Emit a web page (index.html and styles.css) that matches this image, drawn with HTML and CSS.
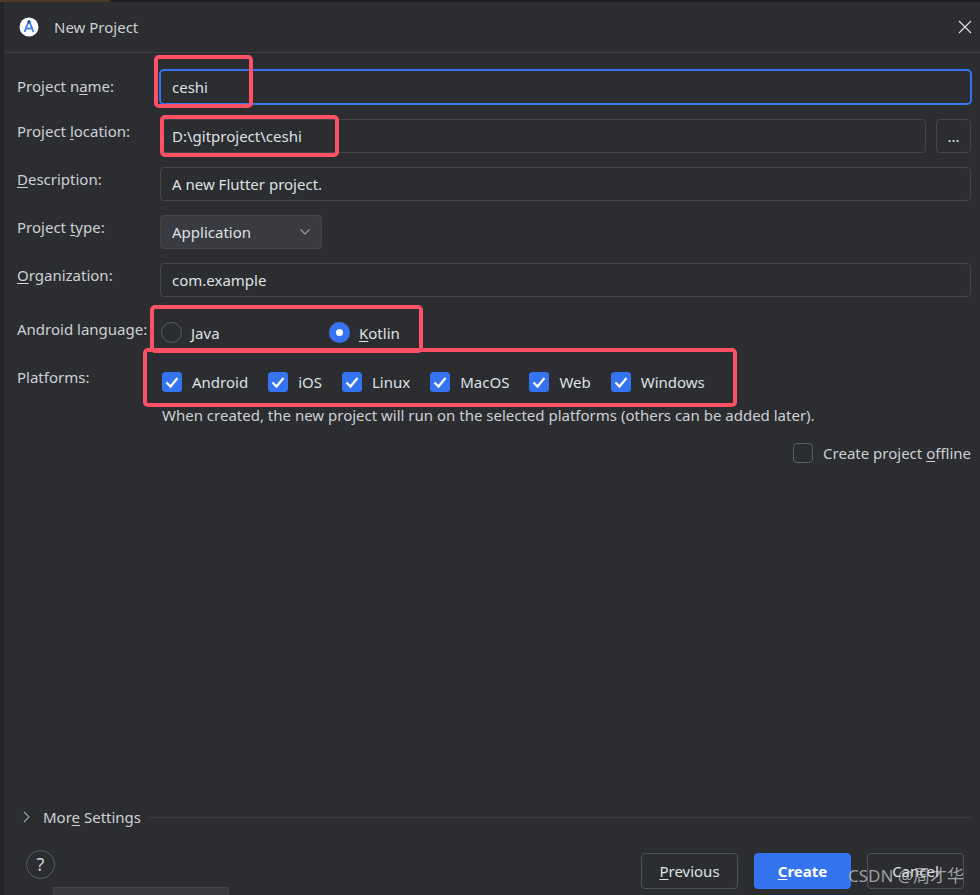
FILE: index.html
```html
<!DOCTYPE html>
<html lang="en">
<head>
    <meta charset="UTF-8">
    <title>New Project</title>
    <link rel="stylesheet" href="styles.css">
</head>
<body>
    <div class="topstrip"><span class="strip-brown"></span></div>
    <div class="leftstrip"></div>

    <section class="dialog">
        <header class="titlebar">
            <svg class="logo" width="20" height="20" viewBox="0 0 20 20">
                <circle cx="10" cy="10" r="9.5" fill="#fff"/>
                <path d="M10 3.5 L5.5 15 M10 3.5 L14.5 15" stroke="#3f7fe8" stroke-width="1.8" fill="none"/>
                <path d="M6 11.5 H14" stroke="#3f7fe8" stroke-width="1.8"/>
                <circle cx="10" cy="5" r="1.6" fill="#1f4f9e"/>
            </svg>
            <span class="title">New Project</span>
            <svg class="close" width="14" height="14" viewBox="0 0 14 14">
                <path d="M1 1 L13 13 M13 1 L1 13" stroke="#e6e6e6" stroke-width="1.1"/>
            </svg>
        </header>

        <main class="form">
            <div class="row row-name">
                <label>Project n<u>a</u>me:</label>
                <div class="field focused">ceshi</div>
            </div>
            <div class="row">
                <label>Project <u>l</u>ocation:</label>
                <div class="field">D:\gitproject\ceshi</div>
                <button class="browse">...</button>
            </div>
            <div class="row">
                <label><u>D</u>escription:</label>
                <div class="field">A new Flutter project.</div>
            </div>
            <div class="row">
                <label>Project <u>t</u>ype:</label>
                <div class="field select">
                    Application
                    <svg width="12" height="8" viewBox="0 0 12 8"><path d="M1.5 1.5 L6 6 L10.5 1.5" stroke="#9da0a8" stroke-width="1.2" fill="none"/></svg>
                </div>
            </div>
            <div class="row">
                <label><u>O</u>rganization:</label>
                <div class="field">com.example</div>
            </div>

            <div class="row row-lang">
                <label>Android language:</label>
                <div class="radios">
                    <span class="radio-item java"><i class="radio"></i><span><u>J</u>ava</span></span>
                    <span class="radio-item"><i class="radio on"></i><span><u>K</u>otlin</span></span>
                </div>
            </div>

            <div class="row row-platforms">
                <label>Platforms:</label>
                <div class="checks">
                    <span class="check-item"><svg class="check" viewBox="0 0 20 20"><rect width="20" height="20" rx="3.5" fill="#3574f0"/><path d="M4.5 10.5 L8.5 14.5 L15.5 6" stroke="#fff" stroke-width="2.2" fill="none"/></svg>Android</span>
                    <span class="check-item"><svg class="check" viewBox="0 0 20 20"><rect width="20" height="20" rx="3.5" fill="#3574f0"/><path d="M4.5 10.5 L8.5 14.5 L15.5 6" stroke="#fff" stroke-width="2.2" fill="none"/></svg>iOS</span>
                    <span class="check-item"><svg class="check" viewBox="0 0 20 20"><rect width="20" height="20" rx="3.5" fill="#3574f0"/><path d="M4.5 10.5 L8.5 14.5 L15.5 6" stroke="#fff" stroke-width="2.2" fill="none"/></svg>Linux</span>
                    <span class="check-item"><svg class="check" viewBox="0 0 20 20"><rect width="20" height="20" rx="3.5" fill="#3574f0"/><path d="M4.5 10.5 L8.5 14.5 L15.5 6" stroke="#fff" stroke-width="2.2" fill="none"/></svg>MacOS</span>
                    <span class="check-item"><svg class="check" viewBox="0 0 20 20"><rect width="20" height="20" rx="3.5" fill="#3574f0"/><path d="M4.5 10.5 L8.5 14.5 L15.5 6" stroke="#fff" stroke-width="2.2" fill="none"/></svg>Web</span>
                    <span class="check-item"><svg class="check" viewBox="0 0 20 20"><rect width="20" height="20" rx="3.5" fill="#3574f0"/><path d="M4.5 10.5 L8.5 14.5 L15.5 6" stroke="#fff" stroke-width="2.2" fill="none"/></svg>Windows</span>
                </div>
            </div>

            <p class="hint">When created, the new project will run on the selected platforms (others can be added later).</p>

            <div class="offline">
                <i class="box"></i>
                <span>Create project <u>o</u>ffline</span>
            </div>
        </main>

        <div class="more">
            <svg width="9" height="12" viewBox="0 0 9 12"><path d="M2 1 L7 6 L2 11" stroke="#9da0a8" stroke-width="1.1" fill="none"/></svg>
            <span>Mor<u>e</u> Settings</span>
            <div class="line"></div>
        </div>

        <footer class="buttons">
            <span class="help">?</span>
            <button class="btn"><u>P</u>revious</button>
            <button class="btn primary"><u>C</u>reate</button>
            <button class="btn">Cancel</button>
        </footer>
    </section>

    <div class="underdialog"></div>

    <!-- red marks drawn on top of the screenshot -->
    <div class="mark m1"></div>
    <div class="mark m2"></div>
    <div class="mark m3"></div>
    <div class="mark m4"></div>

    <div class="watermark">CSDN @周才华</div>
</body>
</html>
```

FILE: styles.css
```css
* {
    box-sizing: border-box;
}

body {
    margin: 0;
    width: 980px;
    height: 895px;
    overflow: hidden;
    position: relative;
    background-color: #2b2d30;
    color: #dfe1e5;
    font-family: "Noto Sans", "Noto Sans CJK SC", sans-serif;
    font-size: 15px;
}

u {
    text-underline-offset: 2px;
}

.topstrip {
    height: 2px;
    background-color: #1e1f22;
}

.strip-brown {
    display: block;
    width: 110px;
    height: 2px;
    background-color: #4a3a26;
}

.leftstrip {
    position: absolute;
    left: 0;
    top: 2px;
    width: 4px;
    height: 893px;
    background-color: #232427;
}

.dialog {
    margin-left: 4px;
    height: 893px;
    display: flex;
    flex-direction: column;
}

.titlebar {
    height: 51px;
    flex: none;
    border-bottom: 1px solid #3c3e43;
    display: flex;
    align-items: center;
    padding: 0 8px 0 15px;
}

.title {
    margin-left: 15px;
    color: #ced0d6;
}

.close {
    margin-left: auto;
}

.form {
    padding: 16px 9px 0 13px;
    flex: 1;
}

.row {
    display: flex;
    margin-bottom: 14px;
}

.row label {
    width: 143px;
    flex: none;
    color: #ced0d6;
    line-height: 24px;
    padding-top: 0;
    white-space: nowrap;
}

.row-name label {
    padding-top: 5px;
}

.field {
    flex: 1;
    height: 34px;
    line-height: 32px;
    border: 1px solid #43454a;
    border-radius: 4px;
    padding: 0 11px;
    color: #dfe1e5;
}

.focused {
    height: 36px;
    line-height: 32px;
    border: 2px solid #3574f0;
    border-radius: 5px;
    margin-left: -1px;
    margin-right: -1px;
    padding-left: 11px;
}

.select {
    flex: none;
    width: 162px;
    background-color: #393b40;
    display: flex;
    align-items: center;
    justify-content: space-between;
    padding-right: 10px;
}

.browse {
    flex: none;
    width: 35px;
    height: 34px;
    margin-left: 10px;
    background: none;
    border: 1px solid #43454a;
    border-radius: 4px;
    color: #dfe1e5;
    font: inherit;
    padding: 0;
}

.row-lang {
    margin-top: 20px;
    margin-bottom: 0;
}

.radios {
    display: flex;
    padding-top: 5px;
    margin-left: 1px;
}

.radio-item {
    display: flex;
    align-items: center;
    gap: 9px;
}

.java {
    width: 168px;
}

.radio {
    width: 21px;
    height: 21px;
    border-radius: 50%;
    border: 1px solid #5a5d63;
    display: block;
}

.radio.on {
    background-color: #3574f0;
    border: 7px solid #3574f0;
    background-color: #fff;
}

.row-platforms {
    margin-top: 22px;
    margin-bottom: 0;
}

.checks {
    display: flex;
    padding-top: 7px;
    margin-left: 2px;
}

.check-item {
    display: flex;
    align-items: center;
    margin-right: 20px;
}

.check {
    width: 20px;
    height: 20px;
    margin-right: 10px;
}

.hint {
    margin: 13px 0 0 145px;
    color: #ced0d6;
    white-space: nowrap;
}

.offline {
    margin-top: 18px;
    display: flex;
    justify-content: flex-end;
    align-items: center;
    gap: 10px;
    color: #ced0d6;
}

.box {
    width: 20px;
    height: 20px;
    border: 1px solid #5a5d63;
    border-radius: 4px;
    display: block;
}

.more {
    flex: none;
    display: flex;
    align-items: center;
    height: 24px;
    padding: 0 9px 0 18px;
    color: #ced0d6;
}

.more span {
    margin-left: 12px;
    white-space: nowrap;
}

.line {
    flex: 1;
    height: 1px;
    background-color: #3c3e43;
    margin-left: 8px;
}

.buttons {
    flex: none;
    height: 66px;
    padding: 24px 16px 6px 22px;
    display: flex;
    align-items: center;
    gap: 16px;
}

.help {
    width: 29px;
    height: 29px;
    margin-right: auto;
    margin-top: -13px;
    border: 1px solid #5a5d63;
    border-radius: 50%;
    text-align: center;
    line-height: 27px;
    font-size: 18px;
    color: #ced0d6;
}

.btn {
    width: 97px;
    height: 36px;
    background: none;
    border: 1px solid #4e5157;
    border-radius: 4px;
    color: #dfe1e5;
    font: inherit;
    padding: 0;
}

.primary {
    background-color: #3574f0;
    border-color: #3574f0;
    color: #fff;
    font-weight: 700;
}

.underdialog {
    position: absolute;
    left: 53px;
    top: 887px;
    width: 176px;
    height: 8px;
    background-color: #393b40;
    border: 1px solid #43454a;
    border-bottom: none;
}

.mark {
    position: absolute;
    border: 4px solid #ff5166;
    border-radius: 5px;
}

.m1 { left: 154px; top: 55px; width: 99px; height: 53px; }
.m2 { left: 160px; top: 115px; width: 179px; height: 42px; }
.m3 { left: 150px; top: 305px; width: 273px; height: 48px; }
.m4 { left: 143px; top: 348px; width: 594px; height: 59px; }

.watermark {
    position: absolute;
    left: 848px;
    top: 864px;
    font-size: 17px;
    line-height: 24px;
    color: rgba(200, 200, 200, 0.75);
    white-space: nowrap;
}
```
